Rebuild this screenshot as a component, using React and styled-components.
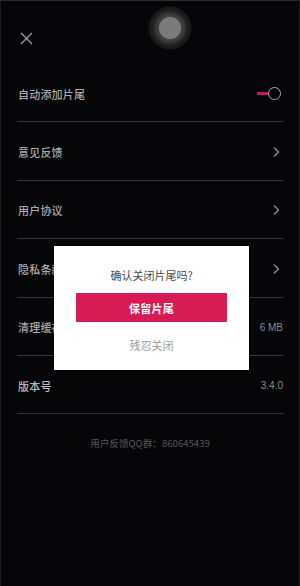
import React, { useState } from "react";
import styled, { createGlobalStyle } from "styled-components";

const GlobalStyle = createGlobalStyle`
  html, body {
    margin: 0;
    padding: 0;
    background: #060608;
  }
  body {
    font-family: "Noto Sans CJK SC", "Noto Sans", sans-serif;
  }
`;

const Screen = styled.div`
  position: relative;
  box-sizing: border-box;
  width: 300px;
  height: 586px;
  overflow: hidden;
  background: #060608;
  border-top: 1px solid #2a2a2c;
  border-left: 1px solid #1c1c1e;
  border-right: 1px solid #1c1c1e;
`;

const Header = styled.header`
  box-sizing: border-box;
  height: 63px;
  padding: 11px 0 0 18px;
  display: flex;
  align-items: center;
`;

const CloseButton = styled.button`
  width: 14px;
  height: 14px;
  padding: 0;
  border: 0;
  background: none;
  display: flex;
  align-items: center;
  justify-content: center;
`;

const FloatBall = styled.div`
  position: absolute;
  left: 147px;
  top: 5px;
  width: 44px;
  height: 44px;
  border-radius: 50%;
  background: radial-gradient(
    circle,
    #7a7a7a 0,
    #7a7a7a 10.5px,
    #444 11.5px,
    #333 15px,
    #222 17px,
    #161616 21px,
    transparent 22px
  );
`;

const List = styled.ul`
  list-style: none;
  margin: 0 15px 0 16px;
  padding: 0;
`;

const Row = styled.li`
  box-sizing: border-box;
  height: 58.4px;
  padding: 2px 4px 0 1px;
  border-bottom: 1px solid #333335;
  display: flex;
  align-items: center;
  justify-content: space-between;
`;

const Label = styled.span`
  font-size: 11px;
  color: ${({ $strong }) => ($strong ? "#b8b8b8" : "#a8a8a8")};
  font-weight: 500;
  letter-spacing: 0.2px;
`;

const Value = styled.span`
  font-family: "Liberation Sans", "Noto Sans CJK SC", sans-serif;
  font-size: 10px;
  color: #8a8a8a;
  margin-right: -3px;
`;

const Toggle = styled.button`
  position: relative;
  width: 24px;
  height: 14px;
  padding: 0;
  border: 0;
  background: none;
  display: flex;
  align-items: center;
  margin-right: -1px;

  &::before {
    content: "";
    width: 12px;
    height: 3px;
    background: ${({ $on }) => ($on ? "#c8175a" : "#555")};
  }

  &::after {
    content: "";
    box-sizing: border-box;
    width: 13px;
    height: 13px;
    border: 1.5px solid #9a9a9a;
    border-radius: 50%;
    background: #060608;
  }
`;

const Footer = styled.p`
  margin: 22px 0 0;
  text-align: center;
  font-size: 9.6px;
  color: #565656;
`;

const Dialog = styled.div`
  position: absolute;
  left: 53px;
  top: 245px;
  box-sizing: border-box;
  width: 195px;
  height: 124px;
  padding: 22px 22px 0;
  background: #ffffff;
  display: flex;
  flex-direction: column;
  align-items: stretch;
`;

const DialogTitle = styled.p`
  margin: 0;
  line-height: 14px;
  text-align: center;
  font-size: 11px;
  color: #4a4a4a;
`;

const PrimaryButton = styled.button`
  margin-top: 11px;
  height: 29px;
  border: 0;
  border-radius: 1px;
  background: #d81b55;
  color: #fff;
  font-family: inherit;
  font-size: 11px;
  font-weight: 700;
  letter-spacing: 0.3px;
`;

const GhostButton = styled.button`
  margin-top: 16px;
  height: 14px;
  padding: 0;
  border: 0;
  background: none;
  font-family: inherit;
  font-size: 11px;
  line-height: 14px;
  color: #9c9c9c;
`;

const Chevron = () => (
  <svg width="8" height="12" viewBox="0 0 8 12">
    <path d="M2 1.5 L6.5 6 L2 10.5" fill="none" stroke="#8c8c8c" strokeWidth="1.4" />
  </svg>
);

const CloseIcon = () => (
  <svg width="13" height="13" viewBox="0 0 13 13">
    <path d="M1 1 L12 12 M12 1 L1 12" stroke="#9a9a9a" strokeWidth="1.4" />
  </svg>
);

const rows = [
  { label: "意见反馈", arrow: true },
  { label: "用户协议", arrow: true },
  { label: "隐私条款", arrow: true },
  { label: "清理缓存", value: "6 MB" },
  { label: "版本号", value: "3.4.0", strong: true },
];

export default function App() {
  const [autoTail, setAutoTail] = useState(true);

  return (
    <>
      <GlobalStyle />
      <Screen>
        <Header>
          <CloseButton>
            <CloseIcon />
          </CloseButton>
        </Header>
        <FloatBall />
        <List>
          <Row>
            <Label>自动添加片尾</Label>
            <Toggle $on={autoTail} onClick={() => setAutoTail(!autoTail)} />
          </Row>
          {rows.map((r) => (
            <Row key={r.label}>
              <Label $strong={r.strong}>{r.label}</Label>
              {r.arrow ? <Chevron /> : <Value>{r.value}</Value>}
            </Row>
          ))}
        </List>
        <Footer>用户反馈QQ群：860645439</Footer>

        <Dialog>
          <DialogTitle>确认关闭片尾吗?</DialogTitle>
          <PrimaryButton>保留片尾</PrimaryButton>
          <GhostButton>残忍关闭</GhostButton>
        </Dialog>
      </Screen>
    </>
  );
}
